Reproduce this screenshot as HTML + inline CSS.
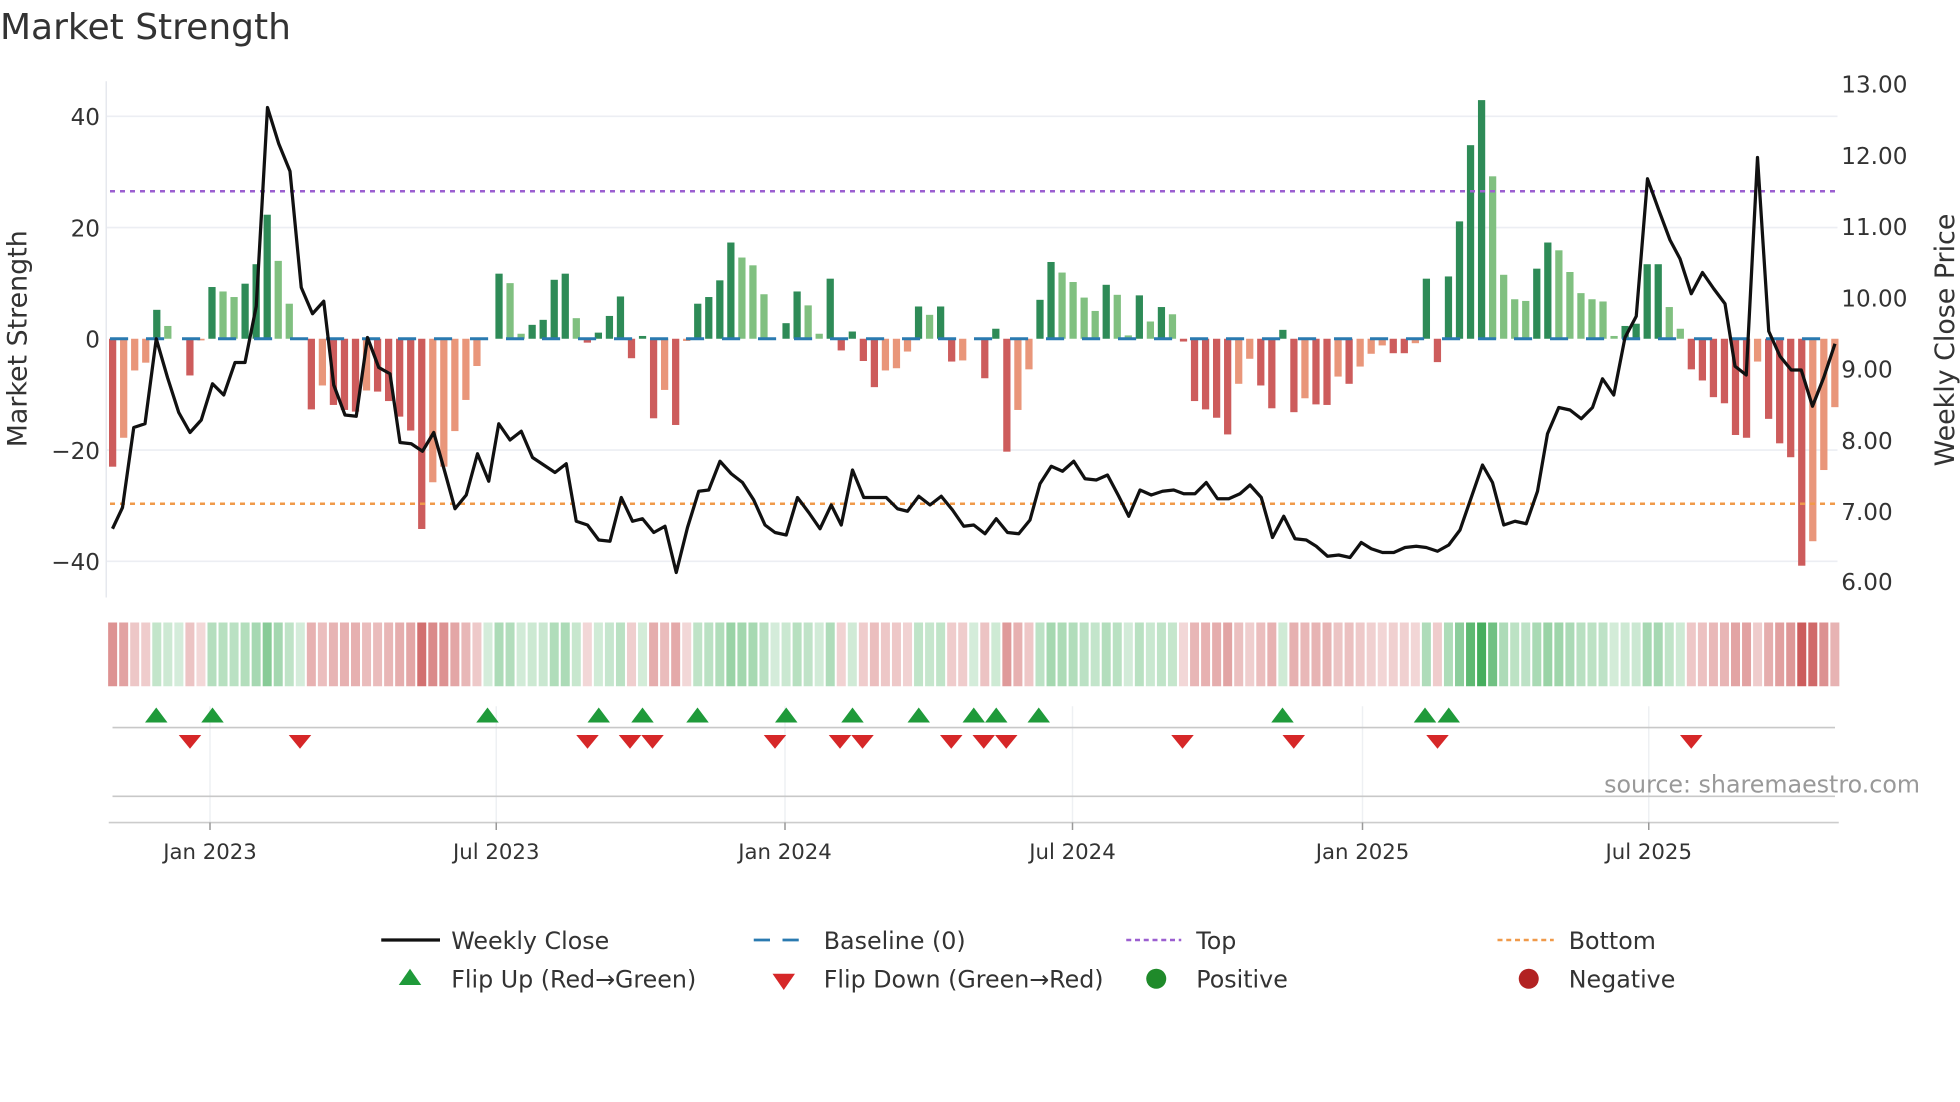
<!DOCTYPE html>
<html><head><meta charset="utf-8"><style>
html,body{margin:0;padding:0;background:#fff;}
svg{display:block;font-family:"DejaVu Sans","Liberation Sans",sans-serif;}
</style></head><body>
<svg id="s" width="1960" height="1102" viewBox="0 0 1568 881.6" xmlns="http://www.w3.org/2000/svg">
<rect width="1568" height="882" fill="#fff"/>
<text x="0" y="31" font-size="28.8" fill="#333">Market Strength</text>
<g stroke="#eceef3" stroke-width="1.3">
<line x1="85" y1="93" x2="1470" y2="93"/><line x1="85" y1="182" x2="1470" y2="182"/>
<line x1="85" y1="360" x2="1470" y2="360"/><line x1="85" y1="449" x2="1470" y2="449"/>
</g>
<line x1="85" y1="65" x2="85" y2="478" stroke="#e6e8ee" stroke-width="1.2"/>
<g font-size="18.5" fill="#333" text-anchor="end">
<text x="80" y="100">40</text><text x="80" y="189">20</text><text x="80" y="278">0</text>
<text x="80" y="367">−20</text><text x="80" y="456">−40</text>
</g>
<g font-size="18.5" fill="#333">
<text x="1473" y="74">13.00</text><text x="1473" y="131">12.00</text><text x="1473" y="188">11.00</text>
<text x="1473" y="245">10.00</text><text x="1473" y="302">9.00</text><text x="1473" y="359">8.00</text>
<text x="1473" y="416">7.00</text><text x="1473" y="472">6.00</text>
</g>
<text transform="translate(21,271) rotate(-90)" font-size="21.5" fill="#333" text-anchor="middle">Market Strength</text>
<text transform="translate(1563,272) rotate(-90)" font-size="21.5" fill="#333" text-anchor="middle">Weekly Close Price</text>
<g id="bars"></g>
<line x1="88" y1="271" x2="1470" y2="271" stroke="#2a7ab0" stroke-width="2.4" stroke-dasharray="14.5 14.3"/>
<line x1="88" y1="153" x2="1470" y2="153" stroke="#9b5fd0" stroke-width="2" stroke-dasharray="4 4"/>
<line x1="88" y1="403" x2="1470" y2="403" stroke="#f09a4a" stroke-width="2" stroke-dasharray="4 4"/>
<polyline fill="none" stroke="#111" stroke-width="2.6" stroke-linejoin="round" points="90,423 98,406 107,342 116,339 125,271 134,302 143,330 152,346 161,336 170,307 179,316 188,290 196,290 205,245 214,86 223,115 232,137 241,230 250,251 259,241 267,308 276,332 285,333 294,270 303,294 312,299 320,354 329,355 338,361 347,346 356,378 364,407 373,396 382,363 391,385 399,339 408,352 417,345 426,366 435,372 444,378 453,371 461,417 470,420 479,432 488,433 497,398 506,417 514,415 523,426 532,421 541,458 550,422 559,393 567,392 576,369 585,379 594,386 603,400 612,420 620,426 629,428 638,398 647,410 656,423 665,404 673,420 682,376 691,398 700,398 709,398 718,407 726,409 735,397 744,404 753,397 762,408 771,421 779,420 788,427 797,415 806,426 815,427 824,416 832,387 841,373 850,377 859,369 868,383 877,384 886,380 895,397 903,413 912,392 921,396 930,393 939,392 947,395 956,395 965,386 974,399 983,399 992,395 1000,388 1009,398 1018,430 1027,413 1036,431 1045,432 1053,437 1062,445 1071,444 1080,446 1089,434 1097,439 1106,442 1115,442 1124,438 1133,437 1141,438 1150,441 1159,436 1168,424 1177,398 1186,372 1194,386 1203,420 1212,417 1221,419 1230,393 1238,347 1247,326 1256,328 1265,335 1274,326 1282,303 1291,316 1300,270 1309,253 1318,143 1327,168 1336,192 1344,207 1353,235 1362,218 1371,231 1380,243 1388,293 1397,300 1406,126 1415,265 1424,285 1433,296 1441,296 1450,325 1459,302 1468,275"/>
<g id="strip"></g>
<g stroke="#eef0f3" stroke-width="1.2">
<line x1="168" y1="565" x2="168" y2="658"/><line x1="397" y1="565" x2="397" y2="658"/>
<line x1="628" y1="565" x2="628" y2="658"/><line x1="858" y1="565" x2="858" y2="658"/>
<line x1="1090" y1="565" x2="1090" y2="658"/><line x1="1319" y1="565" x2="1319" y2="658"/>
</g>
<line x1="90" y1="582" x2="1468" y2="582" stroke="#c8c8c8" stroke-width="1.3"/>
<line x1="90" y1="637" x2="1468" y2="637" stroke="#c8c8c8" stroke-width="1.3"/>
<g id="mk"></g>
<text x="1536" y="634" font-size="19" fill="#999" text-anchor="end">source: sharemaestro.com</text>
<line x1="87" y1="658" x2="1471" y2="658" stroke="#ccc" stroke-width="1.3"/>
<g stroke="#999" stroke-width="1.2">
<line x1="168" y1="658" x2="168" y2="664"/><line x1="397" y1="658" x2="397" y2="664"/>
<line x1="628" y1="658" x2="628" y2="664"/><line x1="858" y1="658" x2="858" y2="664"/>
<line x1="1090" y1="658" x2="1090" y2="664"/><line x1="1319" y1="658" x2="1319" y2="664"/>
</g>
<g font-size="17" fill="#333" text-anchor="middle">
<text x="168" y="687">Jan 2023</text><text x="397" y="687">Jul 2023</text><text x="628" y="687">Jan 2024</text>
<text x="858" y="687">Jul 2024</text><text x="1090" y="687">Jan 2025</text><text x="1319" y="687">Jul 2025</text>
</g>
<g font-size="19" fill="#333">
<line x1="305" y1="752" x2="352" y2="752" stroke="#111" stroke-width="2.6"/>
<text x="361" y="759">Weekly Close</text>
<line x1="603" y1="752" x2="647" y2="752" stroke="#2a7ab0" stroke-width="2.2" stroke-dasharray="13 10"/>
<text x="659" y="759">Baseline (0)</text>
<line x1="901" y1="752" x2="945" y2="752" stroke="#9b5fd0" stroke-width="2" stroke-dasharray="4 3"/>
<text x="957" y="759">Top</text>
<line x1="1198" y1="752" x2="1243" y2="752" stroke="#f09a4a" stroke-width="2" stroke-dasharray="4 3"/>
<text x="1255" y="759">Bottom</text>
<polygon points="328,775 319,788 337,788" fill="#1f9a3a"/>
<text x="361" y="790">Flip Up (Red→Green)</text>
<polygon points="618,779 636,779 627,792" fill="#d62728"/>
<text x="659" y="790">Flip Down (Green→Red)</text>
<circle cx="925" cy="783" r="8" fill="#1f8a2a"/>
<text x="957" y="790">Positive</text>
<circle cx="1223" cy="783" r="8" fill="#b22222"/>
<text x="1255" y="790">Negative</text>
</g>
</svg>
<script>
var v=[-23,-17.8,-5.7,-4.3,5.2,2.3,0,-6.6,-0.3,9.3,8.5,7.5,9.9,13.4,22.3,14,6.3,0,-12.7,-8.4,-11.9,-12.8,-13.1,-9.3,-9.5,-11.2,-14,-16.5,-34.2,-25.8,-23,-16.6,-11,-4.9,0,11.7,10,0.9,2.5,3.4,10.6,11.7,3.7,-0.7,1.1,4.1,7.6,-3.5,0.5,-14.3,-9.2,-15.5,-0.4,6.3,7.5,10.5,17.3,14.6,13.2,8,0,2.8,8.5,6,0.9,10.8,-2.1,1.3,-4,-8.7,-5.7,-5.3,-2.3,5.8,4.3,5.8,-4.1,-3.9,0,-7.1,1.8,-20.3,-12.8,-5.5,7,13.8,11.9,10.2,7.4,5,9.7,7.9,0.6,7.8,3.1,5.7,4.4,-0.5,-11.2,-12.7,-14.2,-17.2,-8.1,-3.6,-8.4,-12.5,1.6,-13.2,-10.7,-11.8,-11.9,-6.8,-8.1,-5,-2.7,-1.2,-2.6,-2.6,-0.8,10.8,-4.2,11.2,21.1,34.8,42.9,29.2,11.5,7.1,6.8,12.6,17.3,15.9,12,8.2,7.1,6.7,0.5,2.3,2.7,13.4,13.4,5.7,1.8,-5.5,-7.5,-10.5,-11.6,-17.3,-17.8,-4.1,-14.4,-18.8,-21.3,-40.8,-36.4,-23.6,-12.3];
var NS="http://www.w3.org/2000/svg",b=document.getElementById('bars'),st=document.getElementById('strip'),mk=document.getElementById('mk');
function R(p,x,y,w,h,f){var r=document.createElementNS(NS,'rect');r.setAttribute('x',x);r.setAttribute('y',y);r.setAttribute('width',w);r.setAttribute('height',h);r.setAttribute('fill',f);p.appendChild(r);}
for(var i=0;i<v.length;i++){var x=90.1+8.832*i,val=v[i],h=Math.abs(val)*4.45;
 var prev=i>0?v[i-1]:0,dark=Math.abs(val)>=Math.abs(prev)||(val*prev<=0);
 var f=val>=0?(dark?'#2e8b57':'#80c080'):(dark?'#cd5c5c':'#e9967a');
 if(h>0.3)R(b,x-2.9,val>=0?271-h:271,5.8,h,f);
 var a=Math.min(0.95,0.22+Math.abs(val)/40*0.7);
 var c=val>=0?'rgba(60,170,85,'+a+')':'rgba(200,80,80,'+a+')';
 R(st,x-3.6,498,7.2,51,c);}
function T(x,up){var p=document.createElementNS(NS,'polygon');
 if(up)p.setAttribute('points',(x)+',566 '+(x-9)+',578 '+(x+9)+',578');
 else p.setAttribute('points',(x-9)+',588 '+(x+9)+',588 '+x+',599');
 p.setAttribute('fill',up?'#1f9a3a':'#d62728');mk.appendChild(p);}
[125,170,390,479,514,558,629,682,735,779,797,831,1026,1140,1159].forEach(function(x){T(x,1)});
[152,240,470,504,522,620,672,690,761,787,805,946,1035,1150,1353].forEach(function(x){T(x,0)});
</script>
</body></html>
